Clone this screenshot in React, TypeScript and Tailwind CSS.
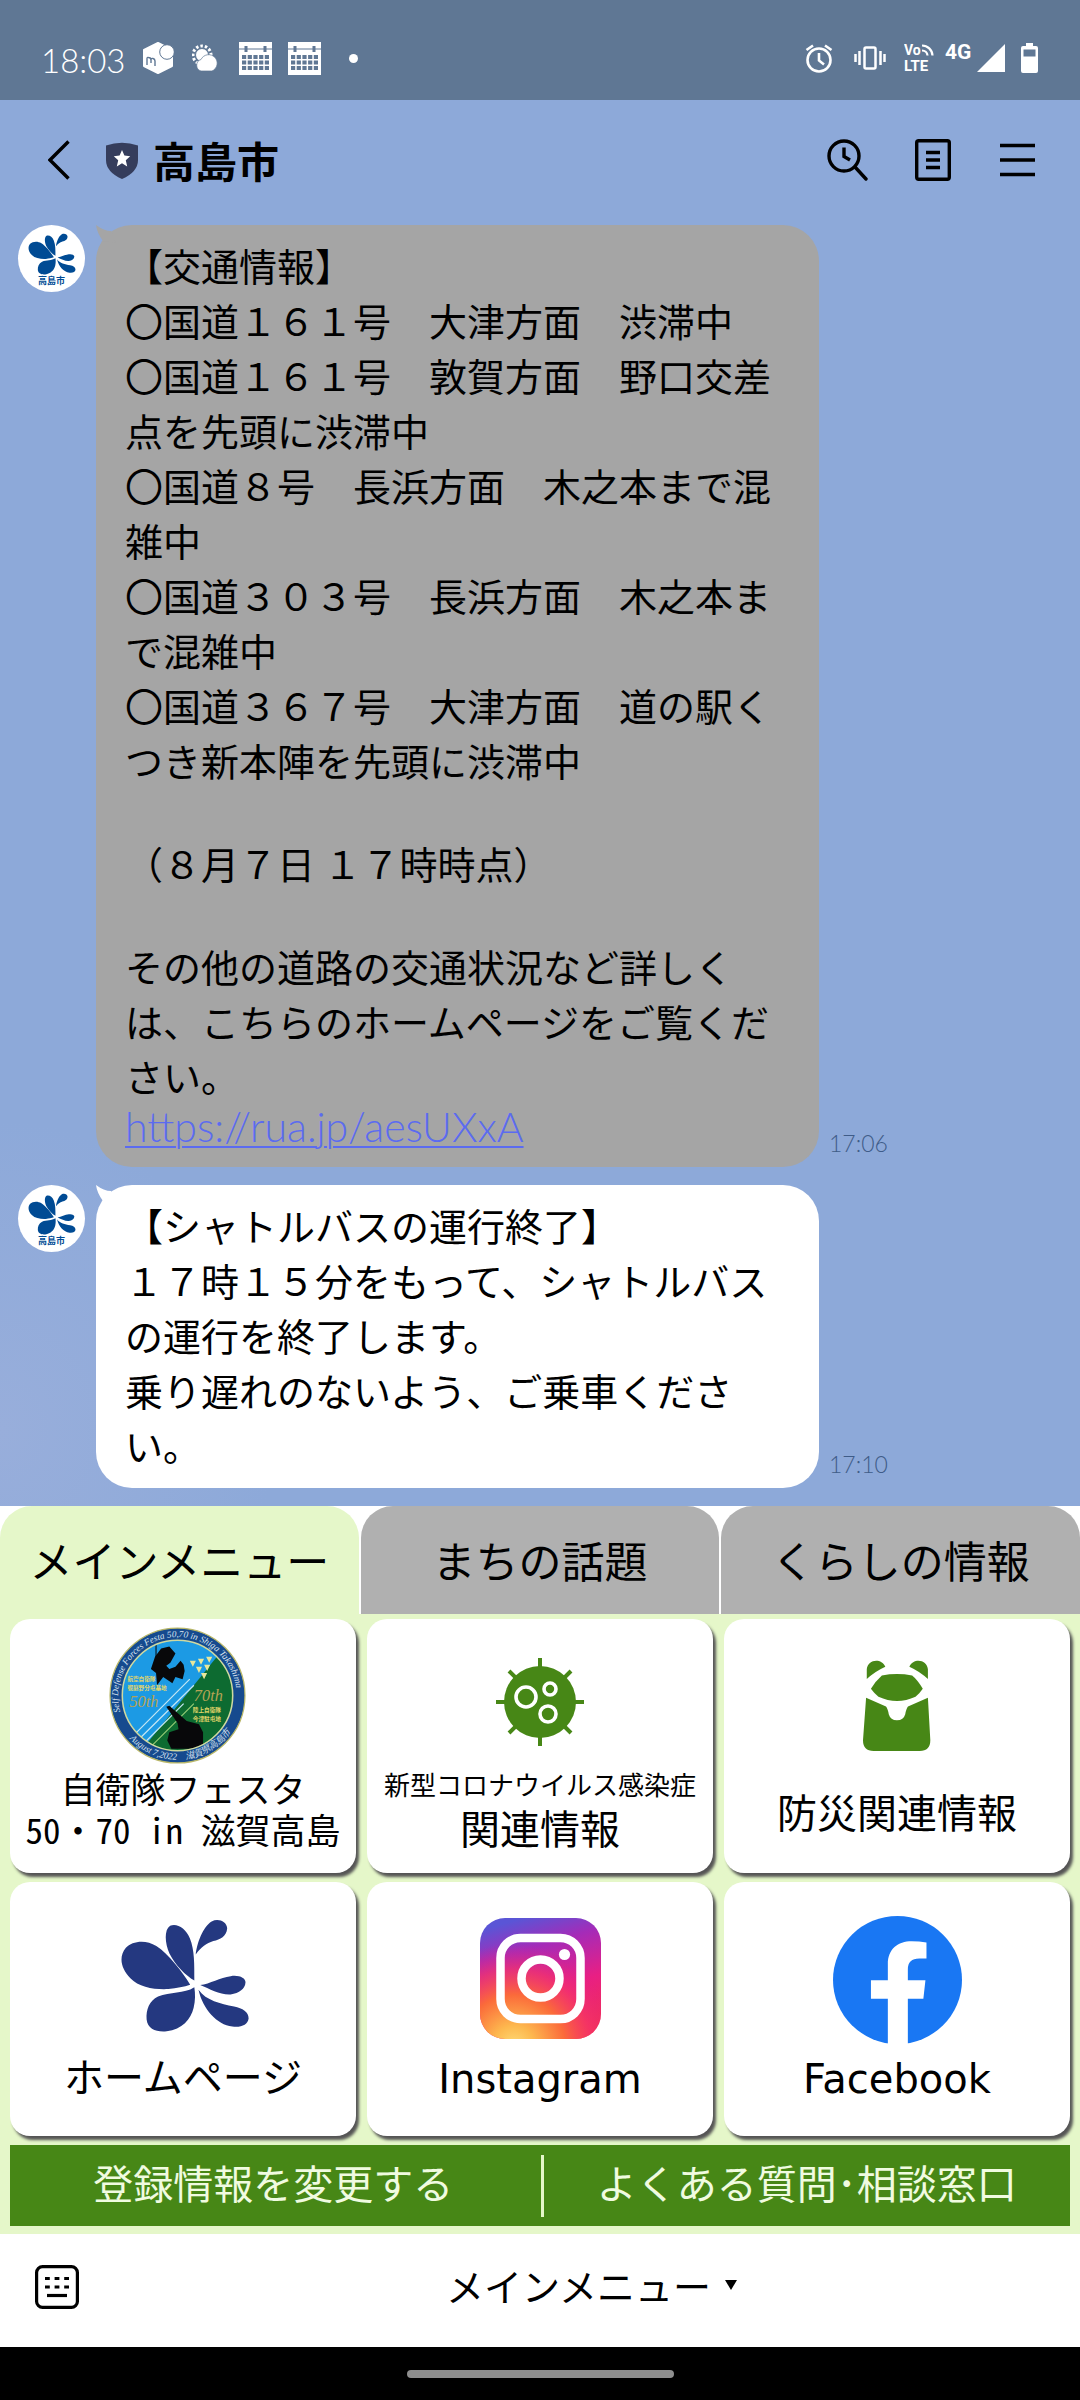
import { useState } from "react"

const tabs = ["メインメニュー", "まちの話題", "くらしの情報"];

function Petals({ className }: { className: string }) {
  return (
    <svg className={className} viewBox="350 140 376 340" preserveAspectRatio="none" fill="currentColor" aria-hidden="true">
      <path d="M553 337C530 300 490 245 455 223C425 203 385 208 367 228C345 255 353 290 380 318C405 345 450 352 490 350C515 347 535 343 553 337Z" />
      <path d="M565 325C540 310 510 280 493 245C480 215 477 175 495 163C515 155 540 170 552 200C566 235 565 280 565 325Z" />
      <path d="M569 248C572 215 590 165 615 150C635 140 658 150 660 170C658 195 640 203 620 208C600 215 585 225 569 248Z" />
      <path d="M582 338C610 335 640 315 670 312C695 308 713 318 713 330C712 350 695 362 670 366C640 368 610 350 582 338Z" />
      <path d="M577 352C600 385 640 392 680 402C705 407 722 418 722 437C720 455 700 465 675 461C630 455 590 410 577 352Z" />
      <path d="M565 345C535 365 495 358 460 372C435 385 425 410 427 440C430 468 455 478 485 475C530 468 555 440 563 405C568 385 568 365 565 345Z" />
    </svg>
  )
}

function CalendarIcon() {
  return (
    <svg className="w-[33px] h-[33px]" viewBox="0 0 33 33" aria-hidden="true">
      <rect width="33" height="33" fill="#fff" />
      <path d="M0 7H33" stroke="#5f7794" strokeWidth="1" />
      <path d="M7 4V10M26 4V10" stroke="#5f7794" strokeWidth="3" />
      <path d="M3 15H30M3 20.500H30M3 26H30" stroke="#5f7794" strokeWidth="4" strokeDasharray="4.200 1.500" />
    </svg>
  )
}

function StatusBar() {
  return (
    <div className="flex h-[100px] items-center justify-between bg-[#5f7794] pl-[41px] pr-[42px] pt-4 text-white">
      <div className="flex items-center">
        <span className="w-[102px] pt-1 font-['Lato'] text-[33px] leading-[40px] font-light">18:03</span>
        <svg className="mr-[18px] w-[31px] h-[32px]" viewBox="0 0 31 32" aria-hidden="true">
          <path d="M15 1L29 8V24L15 31L1 24V8Z" fill="#fff" stroke="#fff" strokeWidth="2" strokeLinejoin="round" />
          <path d="M4 23V16.500Q4 15 5.500 15.500Q8 15.500 8 18V21M8 18Q8 16 10 16.500Q12 17 12 19V24" fill="none" stroke="#5f7794" strokeWidth="1.400" />
          <circle cx="24" cy="10" r="7.300" fill="#fff" stroke="#5f7794" />
        </svg>
        <svg className="mr-[18px] w-[29px] h-[28px]" viewBox="0 0 29 28" aria-hidden="true">
          <circle cx="10" cy="11" r="9" fill="none" stroke="#fff" strokeWidth="3" strokeDasharray="2.500 2" />
          <circle cx="10" cy="11" r="6.500" fill="#fff" stroke="#5f7794" />
          <path d="M9 27A6 6 0 0 1 9 15.500A8.500 8.500 0 1 1 20 27Z" fill="#fff" stroke="#5f7794" strokeWidth=".7" />
        </svg>
        <div className="flex gap-4">
          <CalendarIcon />
          <CalendarIcon />
        </div>
        <span className="ml-7 size-[9px] rounded-full bg-white"></span>
      </div>

      <div className="flex items-center">
        <svg className="mr-[21px] w-[28px] h-[29px]" viewBox="0 0 28 29" fill="none" stroke="#fff" strokeWidth="2.600" aria-hidden="true">
          <circle cx="14" cy="16" r="11.500" />
          <path d="M14 9V16.500L19 20.500M1.500 6L8 1.500M26.500 6L20 1.500" />
        </svg>
        <svg className="mr-[18px] w-[32px] h-[24px]" viewBox="0 0 32 24" fill="none" stroke="#fff" strokeWidth="2.500" aria-hidden="true">
          <rect x="10.500" y="1.500" width="11" height="21" rx="1.500" />
          <path d="M1.500 8V16M5.500 5V19M26.500 5V19M30.500 8V16" />
        </svg>
        <svg className="mr-[9px] w-[32px] h-[36px] font-['Roboto'] font-bold" viewBox="0 -3 32 36" fill="#fff" aria-hidden="true">
          <text x="0" y="12" fontSize="14">Vo</text>
          <text x="0" y="28" fontSize="15">LTE</text>
          <path d="M18 2.500A10.500 10.500 0 0 1 28.500 12.500M18 7.500A5.500 5.500 0 0 1 23.500 12.500" fill="none" stroke="#fff" strokeWidth="2.200" />
        </svg>
        <span className="w-[32px] self-start pt-[3px] font-['Roboto'] text-[21px] leading-[18px] font-bold">4G</span>
        <svg className="mr-[16px] w-[28px] h-[28px]" viewBox="0 0 28 28" fill="#fff" aria-hidden="true">
          <path d="M28 0V28H0Z" />
        </svg>
        <svg className="w-[17px] h-[30px]" viewBox="0 0 17 30" aria-hidden="true">
          <path d="M5 0H12V3H15Q17 3 17 5V28Q17 30 15 30H2Q0 30 0 28V5Q0 3 2 3H5Z" fill="#fff" />
          <rect x="2.500" y="6.500" width="12" height="7" fill="#5f7794" />
        </svg>
      </div>
    </div>
  )
}

function Header() {
  return (
    <header className="flex h-[120px] items-center justify-between pl-12 pr-11 text-black">
      <div className="flex items-center">
        <button aria-label="戻る">
          <svg className="w-[22px] h-[40px]" viewBox="0 0 22 40" fill="none" stroke="currentColor" strokeWidth="3.400">
            <path d="M20.500 1.500L2 20L20.500 38.500" />
          </svg>
        </button>
        <svg className="ml-9 w-[32px] h-[37px]" viewBox="0 0 32 37" aria-hidden="true">
          <path d="M0 3.500Q16 -2 32 3.500V18Q32 30 16 37Q0 30 0 18Z" fill="#353d5c" />
          <path d="M16 8L18.400 13.600L24.200 14.200L19.800 18.200L21.200 24.500L16 21.200L10.800 24.500L12.200 18.200L7.800 14.200L13.600 13.600Z" fill="#fff" />
        </svg>
        <h1 className="ml-[15px] text-[42px] leading-[60px] font-bold">高島市</h1>
      </div>
      <div className="flex items-center gap-[46px]">
        <button aria-label="検索">
          <svg className="w-[42px] h-[42px]" viewBox="0 0 42 42" fill="none" stroke="currentColor" strokeWidth="3.400">
            <circle cx="17" cy="17" r="15" />
            <path d="M17 8.500V17.500L23 21" />
            <path d="M28 28L39 40" strokeLinecap="round" />
          </svg>
        </button>
        <button aria-label="ノート">
          <svg className="w-[37px] h-[42px]" viewBox="0 0 37 42" fill="none" stroke="currentColor" strokeWidth="3.400">
            <rect x="1.700" y="1.700" width="32.600" height="38.600" rx="2" />
            <path d="M11 13.500H25M11 21H25M11 28.500H25" />
          </svg>
        </button>
        <button aria-label="メニュー">
          <svg className="w-[38px] h-[36px]" viewBox="0 0 38 36" fill="none" stroke="currentColor" strokeWidth="3.600">
            <path d="M2 3.500H37M2 18H37M2 32.500H37" />
          </svg>
        </button>
      </div>
    </header>
  )
}

function Message({ time, grey, children }: { time: string; grey?: boolean; children: React.ReactNode }) {
  return (
    <article className="flex items-start gap-[11px]">
      <div className="flex size-[67px] shrink-0 flex-col items-center rounded-full bg-white pt-2 text-[#004b94]">
        <Petals className="w-[48px] h-[42px]" />
        <span className="text-[9px] leading-[12px] font-bold">高島市</span>
      </div>
      <div className={`relative w-[723px] rounded-[36px] px-[29px] pt-3 pb-4 text-[38px] leading-[55px] text-black ${grey ? "bg-[#a5a5a5]" : "bg-white"}`}>
        <svg className={`absolute top-0 left-0 w-[36px] h-[36px] ${grey ? "text-[#a5a5a5]" : "text-white"}`} viewBox="0 0 36 36" fill="currentColor" aria-hidden="true">
          <path d="M0 0Q8 6 15 6L20 18L7 16Q1 8 0 0Z" />
        </svg>
        {children}
      </div>
      <time className="-ml-px self-end pb-2 font-['Lato'] text-[23px] leading-[32px] font-light text-[#3f5c88]">{time}</time>
    </article>
  )
}

function FestaSeal() {
  return (
    <svg className="w-[137px] h-[137px]" viewBox="1 1 134 134" aria-hidden="true">
      <defs>
        <clipPath id="sealInner"><circle cx="68" cy="68" r="54" /></clipPath>
        <path id="sealTop" d="M12 84A58 58 0 1 1 124 84" />
        <path id="sealBottom" d="M16 104A64 64 0 0 0 120 104" />
      </defs>
      <circle cx="68" cy="68" r="66" fill="#164a8e" stroke="#b9b768" strokeWidth="1.200" />
      <g clipPath="url(#sealInner)">
        <rect width="136" height="136" fill="#1c9ae4" />
        <path d="M34 120L113 22L136 40V136H30Z" fill="#0d6b31" />
        <path d="M26 106L80 52M31 110L84 58M36 114L74 76" stroke="#c4e6f3" strokeWidth="1.200" />
        <path d="M42 118L84 76" stroke="#9ed07a" strokeWidth="1" />
        <path d="M47 14V42" stroke="#08080a" />
        <path d="M52 22L60 20L66 27L61 36L57 39L60 42L66 40L71 34L74 38L75 44L73 52L66 50L63 56L54 50L48 58L47 46L42 42L46 30Z" fill="#08080a" />
        <path d="M57 79L60 78L77 93L89 96L93 104V116L88 120H62L58 112L60 104L69 101L68 95Z" fill="#08080a" />
        <g fill="#e9e79b">
          <path d="M80 34L86 34L83 40ZM88 32L94 32L91 38ZM96 30L102 30L99 36ZM86 40L92 40L89 46ZM94 38L100 38L97 44ZM91 46L97 46L94 52Z" />
        </g>
        <g fill="#e4d66a" fontSize="5.500" fontWeight="700">
          <text x="19" y="54">航空自衛隊</text>
          <text x="19" y="63">饗庭野分屯基地</text>
          <text x="83" y="84">陸上自衛隊</text>
          <text x="83" y="93">今津駐屯地</text>
        </g>
        <g fill="#b5a355" fontFamily="Liberation Serif" fontStyle="italic" fontSize="16">
          <text x="21" y="79">50th</text>
          <text x="84" y="73">70th</text>
        </g>
      </g>
      <circle cx="68" cy="68" r="54" fill="none" stroke="#cfd9a0" strokeWidth="1.500" />
      <g fill="#dbe4f0" fontFamily="Liberation Serif" fontStyle="italic" fontSize="9">
        <text><textPath href="#sealTop">Self Defense Forces Festa 50,70 in Shiga Takashima</textPath></text>
        <text><textPath href="#sealBottom" startOffset="8">August 7,2022　滋賀県高島市</textPath></text>
      </g>
    </svg>
  )
}

function VirusIcon() {
  return (
    <svg className="w-[90px] h-[90px]" viewBox="-45 -45 90 90" stroke="#478716" aria-hidden="true">
      <path d="M0 -44V44M-44 0H44M-31 -31L31 31M-31 31L31 -31" strokeWidth="4" />
      <circle r="36" fill="#478716" stroke="none" />
      <g fill="none" stroke="#fff" strokeWidth="3.600">
        <circle cx="-14" cy="-5" r="10" />
        <circle cx="10" cy="-13" r="6" />
        <circle cx="8" cy="12" r="8" />
      </g>
    </svg>
  )
}

function BackpackIcon() {
  return (
    <svg className="w-[68px] h-[91px]" viewBox="935 510 198 272" preserveAspectRatio="none" fill="#478716" aria-hidden="true">
      <path d="M946 567V538C948 508 988 502 1000 530Q968 545 946 567ZM1124 567V538C1122 508 1082 502 1070 530Q1102 545 1124 567Z" />
      <path d="M990 556Q1034 548 1078 556Q1095 570 1109 596Q1100 610 1088 620Q1034 645 980 620Q968 610 958 596Q972 572 990 556Z" />
      <path d="M944 623L1002 649Q1007 655 1010 672Q1015 690 1034 690Q1053 690 1058 672Q1061 655 1066 649L1124 623L1131 750Q1131 782 1100 782H966Q935 782 935 750Z" />
    </svg>
  )
}

function InstagramIcon() {
  return (
    <svg className="w-[121px] h-[121px]" viewBox="0 0 121 121" aria-hidden="true">
      <defs>
        <linearGradient id="igBase" x1=".35" y1="0" x2=".65" y2="1">
          <stop offset="0" stopColor="#5a55d6" />
          <stop offset=".25" stopColor="#a52bb8" />
          <stop offset=".6" stopColor="#e81f84" />
          <stop offset="1" stopColor="#f4304f" />
        </linearGradient>
        <radialGradient id="igGlow" cx=".28" cy="1.060" r=".85">
          <stop offset="0" stopColor="#fedc78" />
          <stop offset=".2" stopColor="#fdb84e" />
          <stop offset=".5" stopColor="#fb6a3a" />
          <stop offset=".75" stopColor="#f5346a" stopOpacity=".7" />
          <stop offset="1" stopColor="#e0208a" stopOpacity="0" />
        </radialGradient>
      </defs>
      <rect width="121" height="121" rx="25" fill="url(#igBase)" />
      <rect width="121" height="121" rx="25" fill="url(#igGlow)" />
      <g fill="none" stroke="#fff" strokeWidth="8.500">
        <rect x="20.500" y="20" width="80" height="81" rx="20" />
        <circle cx="60.500" cy="60.500" r="19" />
      </g>
      <circle cx="84.500" cy="36.500" r="5.600" fill="#fff" />
    </svg>
  )
}

function FacebookIcon() {
  return (
    <svg className="w-[129px] h-[128px]" viewBox="850 137 374 380" preserveAspectRatio="none" aria-hidden="true">
      <ellipse cx="1037" cy="327" rx="187" ry="190" fill="#1977f3" />
      <path d="M1009 520V383H960V328H1009V280C1009 235 1038 212 1078 212Q1100 212 1121 216V263H1100Q1067 263 1067 295V328H1118L1112 383H1067V520Z" fill="#fff" />
    </svg>
  )
}

function Card({ children }: { children: React.ReactNode }) {
  return (
    <button className="flex h-[254px] flex-col items-center rounded-[20px] bg-white text-[40px] leading-[48px] shadow-[3px_4px_3px_#555]">
      {children}
    </button>
  )
}

function RichMenu() {
  const [active, setActive] = useState(0);

  return (
    <section className="bg-white text-black">
      <div className="flex gap-[2px]">
        {tabs.map((tab, i) => (
          <button
            key={tab}
            onClick={() => setActive(i)}
            className={`h-[108px] flex-1 rounded-t-[32px] pb-[3px] text-[43px] leading-[60px] ${active === i ? "bg-[#e5f7c9]" : "bg-[#b0b0b0]"}`}
          >
            {tab}
          </button>
        ))}
      </div>

      <div className="bg-[#e5f7c9] px-[10px] pt-[5px] pb-2">
        <div className="grid grid-cols-3 gap-[9px] gap-x-[11px]">
          <Card>
            <div className="pt-2 pr-[11px] pb-[3px]"><FestaSeal /></div>
            <span className="font-['Noto_Sans_Mono_CJK_JP','Noto_Sans_CJK_JP',sans-serif] text-[35px] leading-[41px] whitespace-nowrap">自衛隊フェスタ</span>
            <span className="font-['Noto_Sans_Mono_CJK_JP','Noto_Sans_CJK_JP',sans-serif] text-[35px] leading-[41px] whitespace-nowrap">50・70 in 滋賀高島</span>
          </Card>
          <Card>
            <div className="pt-[38px] pb-[18px]"><VirusIcon /></div>
            <span className="text-[26px] leading-[38px] whitespace-nowrap">新型コロナウイルス感染症</span>
            <span>関連情報</span>
          </Card>
          <Card>
            <div className="pt-[41px] pb-[36px]"><BackpackIcon /></div>
            <span>防災関連情報</span>
          </Card>
          <Card>
            <div className="pt-[36px] pb-[18px] pl-1"><Petals className="w-[130px] h-[115px] text-[#243880]" /></div>
            <span>ホームページ</span>
          </Card>
          <Card>
            <div className="pt-[36px] pb-4"><InstagramIcon /></div>
            <span className="font-['DejaVu_Sans']">Instagram</span>
          </Card>
          <Card>
            <div className="pt-[34px] pb-[11px]"><FacebookIcon /></div>
            <span className="font-['DejaVu_Sans']">Facebook</span>
          </Card>
        </div>

        <div className="mt-[9px] flex h-[81px] items-center bg-[#478716] text-[40px] leading-[60px] text-[#f0fbe0]">
          <button className="flex-1 pr-1 pb-2">登録情報を変更する</button>
          <span className="h-[62px] w-[3px] bg-[#e5f7c9]"></span>
          <button className="flex-1 pb-2">よくある質問･相談窓口</button>
        </div>
      </div>
    </section>
  )
}

function BottomBar() {
  return (
    <footer className="bg-white text-black">
      <div className="flex h-[113px] items-center gap-6 pb-2 pl-[35px]">
        <button aria-label="キーボード">
          <svg className="w-[44px] h-[44px]" viewBox="0 0 44 44" fill="none" stroke="currentColor" strokeWidth="3.200">
            <rect x="1.600" y="1.600" width="40.800" height="40.800" rx="6" />
            <path d="M10 13.500H34M10 22H34" strokeDasharray="4.800 4.800" />
            <path d="M12 30.500H32" />
          </svg>
        </button>
        <button className="flex flex-1 items-center justify-center gap-[14px] pb-1 text-[38px] leading-[56px]">
          メインメニュー
          <svg className="w-[12px] h-[10px]" viewBox="0 0 12 10" fill="currentColor" aria-hidden="true">
            <path d="M0 0H12L6 10Z" />
          </svg>
        </button>
      </div>
      <div className="flex h-[53px] items-center justify-center bg-black">
        <span className="h-[8px] w-[267px] rounded-full bg-[#8e8e8e]"></span>
      </div>
    </footer>
  )
}

function App() {
  return (
    <div className="flex min-h-screen flex-col bg-[#8da9d9] font-['Noto_Sans_CJK_JP',sans-serif]">
      <StatusBar />
      <Header />
      <main className="flex flex-1 flex-col gap-[18px] bg-[radial-gradient(ellipse_at_0%_94%,#98aedb_0%,#8da9d9_18%)] px-[18px] pt-[5px] pb-[18px]">
        <Message time="17:06" grey>
          <p>【交通情報】</p>
          <p>〇国道１６１号　大津方面　渋滞中</p>
          <p>〇国道１６１号　敦賀方面　野口交差点を先頭に渋滞中</p>
          <p>〇国道８号　長浜方面　木之本まで混雑中</p>
          <p>〇国道３０３号　長浜方面　木之本まで混雑中</p>
          <p>〇国道３６７号　大津方面　道の駅くつき新本陣を先頭に渋滞中</p>
          <p className="py-[48px]">（８月７日 １７時時点）</p>
          <p>その他の道路の交通状況など詳しくは、こちらのホームページをご覧ください。</p>
          <p className="font-['Lato'] text-[41px] leading-[48px] font-light">
            <a href="https://rua.jp/aesUXxA" className="text-[#5b6bf0] underline decoration-2 underline-offset-4">https://rua.jp/aesUXxA</a>
          </p>
        </Message>
        <Message time="17:10">
          <p>【シャトルバスの運行終了】</p>
          <p>１７時１５分をもって、シャトルバスの運行を終了します。</p>
          <p>乗り遅れのないよう、ご乗車ください。</p>
        </Message>
      </main>
      <RichMenu />
      <BottomBar />
    </div>
  )
}

export default App
